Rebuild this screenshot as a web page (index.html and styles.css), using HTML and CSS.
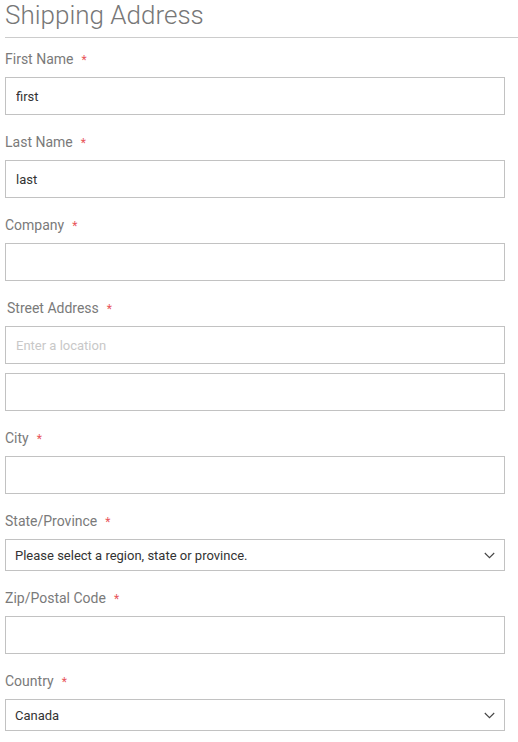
FILE: index.html
```html
<!DOCTYPE html>
<html lang="en">
<head>
  <meta charset="UTF-8">
  <meta name="viewport" content="width=device-width, initial-scale=1.0">
  <title>Shipping Address</title>
  <link rel="stylesheet" href="styles.css">
</head>
<body>
<div class="step-title">Shipping Address</div>
<form class="address-form">
  <div class="field">
    <label for="firstname">First Name<span class="req">*</span></label>
    <input type="text" id="firstname" class="input-text" value="first">
  </div>
  <div class="field">
    <label for="lastname">Last Name<span class="req">*</span></label>
    <input type="text" id="lastname" class="input-text" value="last">
  </div>
  <div class="field">
    <label for="company">Company<span class="req">*</span></label>
    <input type="text" id="company" class="input-text">
  </div>
  <div class="field street">
    <label for="street0">Street Address<span class="req">*</span></label>
    <input type="text" id="street0" class="input-text" placeholder="Enter a location">
    <input type="text" id="street1" class="input-text">
  </div>
  <div class="field">
    <label for="city">City<span class="req">*</span></label>
    <input type="text" id="city" class="input-text">
  </div>
  <div class="field">
    <label for="region">State/Province<span class="req">*</span></label>
    <div class="select-wrap">
      <select id="region" class="select">
        <option>Please select a region, state or province.</option>
      </select>
      <svg class="chevron" width="11" height="7" viewBox="0 0 11 7"><path d="M0.8 1l4.7 4.7 4.7-4.7" fill="none" stroke="#444" stroke-width="1.1"/></svg>
    </div>
  </div>
  <div class="field">
    <label for="postcode">Zip/Postal Code<span class="req">*</span></label>
    <input type="text" id="postcode" class="input-text">
  </div>
  <div class="field">
    <label for="country">Country<span class="req">*</span></label>
    <div class="select-wrap">
      <select id="country" class="select">
        <option>Canada</option>
      </select>
      <svg class="chevron" width="11" height="7" viewBox="0 0 11 7"><path d="M0.8 1l4.7 4.7 4.7-4.7" fill="none" stroke="#444" stroke-width="1.1"/></svg>
    </div>
  </div>
</form>
</body>
</html>
```

FILE: styles.css
```css
body {
  margin: 0;
  font-family: Roboto, "Liberation Sans", Arial, sans-serif;
  color: #333;
  background: #fff;
}
.step-title {
  margin: 0 0 11px 5px;
  padding-bottom: 7px;
  border-bottom: 1px solid #ccc;
  font-size: 26px;
  font-weight: 300;
  line-height: 30px;
  color: #777;
}
.address-form {
  width: 500px;
  margin-left: 5px;
}
.field {
  margin-bottom: 17px;
}
label {
  display: block;
  height: 20px;
  margin-bottom: 8px;
  font-size: 14px;
  line-height: 20px;
  color: #7a7a7a;
}
.req {
  margin-left: 8px;
  color: #e8555a;
  font-size: 12px;
  line-height: 1;
}
.street label {
  padding-left: 2px;
}
.input-text {
  display: block;
  box-sizing: border-box;
  width: 100%;
  height: 38px;
  margin: 0;
  padding: 0 10px;
  border: 1px solid #c2c2c2;
  border-radius: 0;
  font-family: inherit;
  font-size: 13px;
  color: #333;
  background: #fff;
  outline: none;
}
.input-text::placeholder {
  color: #c8c8c8;
}
.street .input-text + .input-text {
  margin-top: 9px;
}
.select-wrap {
  position: relative;
}
.select {
  display: block;
  box-sizing: border-box;
  width: 100%;
  height: 32px;
  margin: 0;
  padding: 0 30px 0 9px;
  border: 1px solid #c2c2c2;
  border-radius: 0;
  font-family: inherit;
  font-size: 13px;
  color: #333;
  background: #fff;
  -webkit-appearance: none;
  appearance: none;
  outline: none;
}
.chevron {
  position: absolute;
  right: 10px;
  top: 13px;
  pointer-events: none;
}
```
